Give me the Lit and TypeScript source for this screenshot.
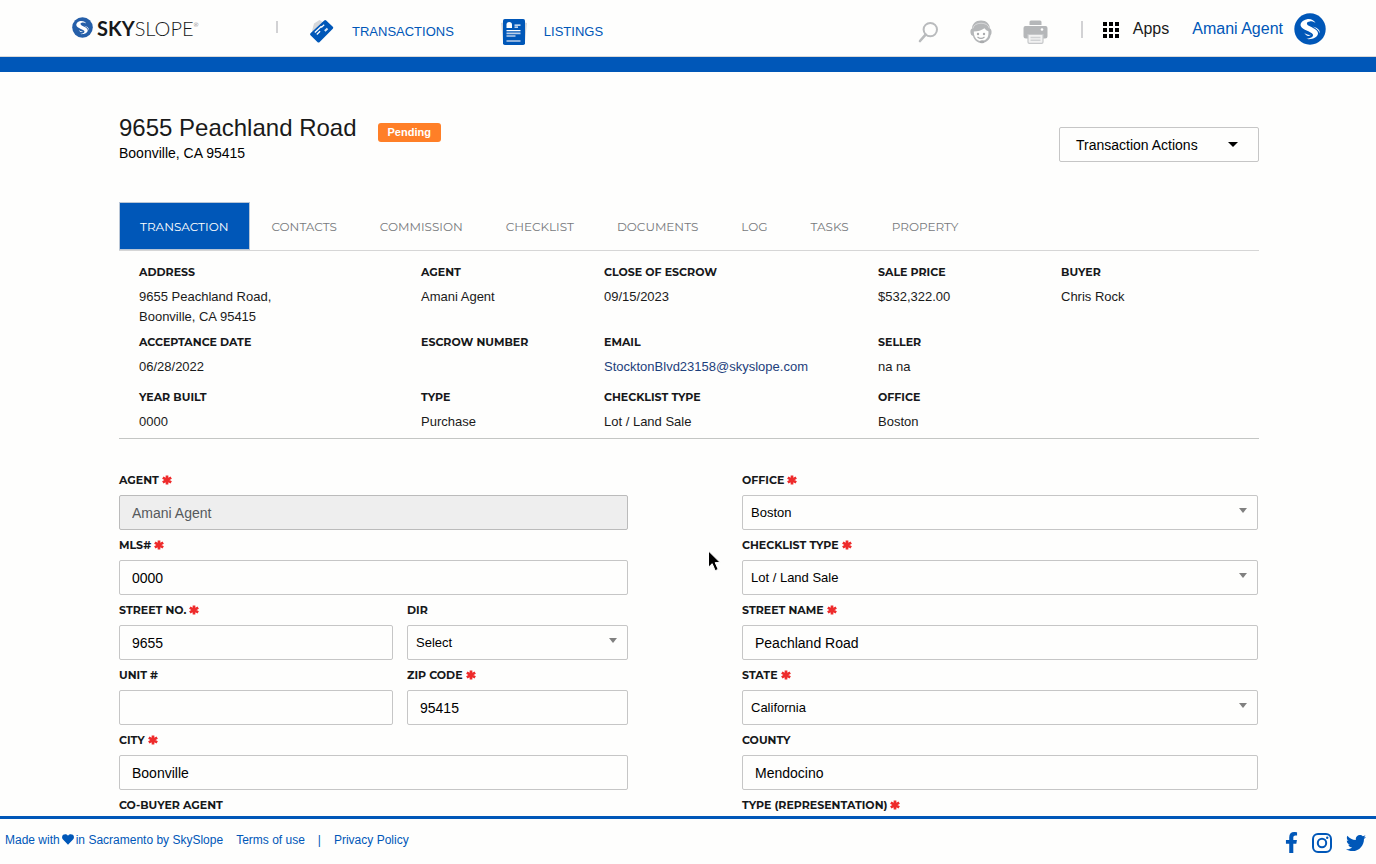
import { LitElement, html, css, svg, nothing } from "lit";
import { customElement } from "lit/decorators.js";
import { classMap } from "lit/directives/class-map.js";

interface SummaryItem {
  label: string;
  lines: string[];
  email?: boolean;
}

interface Field {
  id: string;
  label: string;
  value: string;
  required?: boolean;
  kind?: "text" | "select";
  disabled?: boolean;
}

const TABS = ["Transaction", "Contacts", "Commission", "Checklist", "Documents", "Log", "Tasks", "Property"];

const SUMMARY: (SummaryItem | null)[] = [
  { label: "Address", lines: ["9655 Peachland Road,", "Boonville, CA 95415"] },
  { label: "Agent", lines: ["Amani Agent"] },
  { label: "Close of Escrow", lines: ["09/15/2023"] },
  { label: "Sale Price", lines: ["$532,322.00"] },
  { label: "Buyer", lines: ["Chris Rock"] },
  { label: "Acceptance Date", lines: ["06/28/2022"] },
  { label: "Escrow Number", lines: [] },
  { label: "Email", lines: ["StocktonBlvd23158@skyslope.com"], email: true },
  { label: "Seller", lines: ["na na"] },
  null,
  { label: "Year Built", lines: ["0000"] },
  { label: "Type", lines: ["Purchase"] },
  { label: "Checklist Type", lines: ["Lot / Land Sale"] },
  { label: "Office", lines: ["Boston"] },
  null,
];

const LEFT: Field[][] = [
  [{ id: "agent", label: "Agent", value: "Amani Agent", required: true, disabled: true }],
  [{ id: "mls", label: "MLS#", value: "0000", required: true }],
  [
    { id: "street-no", label: "Street No.", value: "9655", required: true },
    { id: "dir", label: "Dir", value: "Select", kind: "select" },
  ],
  [
    { id: "unit", label: "Unit #", value: "" },
    { id: "zip", label: "Zip Code", value: "95415", required: true },
  ],
  [{ id: "city", label: "City", value: "Boonville", required: true }],
  [{ id: "co-buyer", label: "Co-Buyer Agent", value: "" }],
];

const RIGHT: Field[][] = [
  [{ id: "office", label: "Office", value: "Boston", required: true, kind: "select" }],
  [{ id: "checklist", label: "Checklist Type", value: "Lot / Land Sale", required: true, kind: "select" }],
  [{ id: "street-name", label: "Street Name", value: "Peachland Road", required: true }],
  [{ id: "state", label: "State", value: "California", required: true, kind: "select" }],
  [{ id: "county", label: "County", value: "Mendocino" }],
  [{ id: "type", label: "Type (Representation)", value: "", required: true, kind: "select" }],
];

const swirl = svg`
  <path fill="#fff" d="M21.500 10C20.500 7.500 17 5.600 13 6.200C8 7.200 5.600 10.600 7 13.600C8.800 17 16.400 18.400 18.600 21C20 23.200 18 25 12.400 26C18.600 26.800 23.600 24.400 24 20.600C24.300 16.600 18.600 15 14.800 12.800C12 11 12.400 8.800 15.800 8.400C18 8.200 20 8.800 21.500 10Z"/>
  <path fill="#fff" d="M18.600 13.400C22.600 14.400 26.400 16.400 25.600 20.400C25.200 17.400 22.200 15.400 18.600 13.400ZM10.400 19.800C12 21.600 14.600 22.200 17 21.800C15 24 11.400 22.800 10.400 19.800Z"/>`;

@customElement("app-root")
export class AppRoot extends LitElement {
  static styles = css`
    :host {
      --blue: #0057b8;
      --page: #fefefd;
      --line: #c6c6c6;
      display: flex;
      flex-direction: column;
      height: 100vh;
      background: var(--page);
      color: #1a1a1a;
      font-family: "Helvetica Neue", "Liberation Sans", Arial, sans-serif;
      font-size: 13px;
      line-height: 20px;
    }
    *, *::before, *::after { box-sizing: border-box; }
    svg { display: block; flex: none; }
    a { color: var(--blue); text-decoration: none; }
    button {
      padding: 0;
      border: 0;
      background: none;
      font: inherit;
      color: inherit;
      cursor: pointer;
    }

    .top {
      display: flex;
      align-items: center;
      height: 72px;
      padding: 0 50px 0 72px;
      border-bottom: 15px solid var(--blue);
      box-shadow: inset 0 -1px #d9d9d9;
      flex: none;
    }
    .brand {
      display: flex;
      align-items: center;
      gap: 4px;
      width: 204px;
      padding-bottom: 2px;
      color: #16181a;
      font: 300 20px/24px Lato, sans-serif;
    }
    .brand b { font-weight: 700; }
    .brand sup { font-size: 6px; line-height: 6px; vertical-align: 9px; }
    .rule { width: 2px; height: 12px; margin-bottom: 4px; background: #d2d2d4; }
    .rule.tall { height: 17px; margin: 2px 20px 0 33px; }
    .nav { display: flex; align-items: center; gap: 47px; margin-left: 31px; padding-top: 6px; }
    .nav a { display: flex; align-items: center; gap: 17px; }
    .tools { display: flex; align-items: center; margin-left: auto; }
    .quick { display: flex; align-items: center; gap: 31px; padding-top: 6px; }
    .apps {
      display: flex;
      align-items: center;
      gap: 14px;
      margin-right: 23px;
      font-size: 16px;
    }
    .apps svg { margin-top: 3px; }
    .user { display: flex; align-items: center; gap: 11px; font-size: 16px; }

    .scroll { flex: 1; min-height: 0; overflow: auto; padding: 0 117px 0 119px; scrollbar-width: none; }
    .title {
      display: flex;
      justify-content: space-between;
      align-items: flex-start;
      padding-top: 42px;
      height: 130px;
    }
    .heading { display: flex; align-items: center; gap: 21px; }
    h1 { margin: 0; font-size: 24px; line-height: 28px; font-weight: 400; }
    .city { margin: 0; font-size: 14px; line-height: 22px; color: #000; }
    .badge {
      margin-top: 8px;
      padding: 0 10px;
      border-radius: 3px;
      background: #ff7f27;
      color: #fff;
      font-size: 11px;
      line-height: 19px;
      font-weight: 700;
    }
    .actions {
      display: flex;
      align-items: center;
      justify-content: space-between;
      width: 200px;
      height: 35px;
      margin-top: 13px;
      padding: 0 20px 0 16px;
      border: 1px solid var(--line);
      border-radius: 2px;
      font-size: 14px;
      color: #000;
    }

    .tabs { display: flex; border-bottom: 1px solid #d6d6d6; }
    .tab {
      height: 48px;
      padding: 0 22px 0 21px;
      color: #77797c;
      font: 400 12px/50px Montserrat, Inter, sans-serif;
      text-transform: uppercase;
    }
    .tab.active { background: var(--blue); color: #fff; box-shadow: inset 0 0 0 1px #b9c6d6; }

    .summary {
      display: grid;
      grid-template-columns: 282fr 183fr 274fr 183fr 198fr;
      grid-auto-rows: minmax(52px, auto);
      row-gap: 3px;
      margin: 0;
      padding: 9px 0 1px 20px;
      border-bottom: 1px solid #c4c6c4;
    }
    .summary dt, .label {
      font: 700 11px/24px Montserrat, Inter, sans-serif;
      color: #16181a;
      text-transform: uppercase;
    }
    .summary dt { margin-bottom: 3px; }
    .summary dd { margin: 0; }
    .summary a { color: #1d3f7c; }

    .form {
      display: grid;
      grid-template-columns: 509fr 516fr;
      column-gap: 114px;
      padding: 26px 1px 40px 0;
    }
    .row { display: grid; grid-template-columns: 1fr; }
    .row.two { grid-template-columns: 274fr 221fr; column-gap: 14px; }
    .label { display: flex; align-items: center; gap: 3px; line-height: 30px; }
    .box { position: relative; }
    .control {
      display: block;
      width: 100%;
      height: 35px;
      padding: 0 12px;
      border: 1px solid var(--line);
      border-radius: 2px;
      background: var(--page);
      color: #000;
      font: 14px/20px "Helvetica Neue", "Liberation Sans", Arial, sans-serif;
      outline: 0;
      appearance: none;
    }
    .control:disabled { background: #eeeeee; border-color: #bbb; color: #55595c; opacity: 1; }
    select.control { padding: 0 8px; font-size: 13px; }
    .arrow { position: absolute; right: 11px; top: 13px; pointer-events: none; }

    .bottom {
      display: flex;
      align-items: center;
      justify-content: space-between;
      height: 48px;
      padding: 0 10px 4px 5px;
      border-top: 3px solid var(--blue);
      color: var(--blue);
      font-size: 12px;
      flex: none;
    }
    .legal, .made, .social { display: flex; align-items: center; }
    .made { gap: 2px; }
    .legal { gap: 13px; }
    .social { gap: 14px; padding-top: 6px; }
    .pointer { position: fixed; left: 707px; top: 550px; pointer-events: none; }
  `;

  private renderField(f: Field) {
    return html`<div>
      <label class="label" for=${f.id}>
        <span>${f.label}</span>
        ${f.required
          ? html`<svg width="10" height="10" viewBox="0 0 10 10" aria-hidden="true">
              <path stroke="#ee2b2b" stroke-width="2.700" d="M5 .5v9M.8 2.600l8.400 4.800M9.200 2.600L.8 7.400" />
            </svg>`
          : nothing}
      </label>
      ${f.kind === "select"
        ? html`<div class="box">
            <select class="control" id=${f.id}><option>${f.value}</option></select>
            <svg class="arrow" width="8" height="5" viewBox="0 0 8 5" aria-hidden="true"><path fill="#808080" d="M0 0h8L4 5z" /></svg>
          </div>`
        : html`<input class="control" id=${f.id} type="text" .value=${f.value} ?disabled=${!!f.disabled} />`}
    </div>`;
  }

  private renderColumn(rows: Field[][]) {
    return html`<div>
      ${rows.map((r) => html`<div class=${classMap({ row: true, two: r.length === 2 })}>${r.map((f) => this.renderField(f))}</div>`)}
    </div>`;
  }

  render() {
    return html`
      <header class="top">
        <a class="brand" href="#" aria-label="SkySlope">
          <svg width="21" height="21" viewBox="0 0 32 32"><circle cx="16" cy="16" r="15.700" fill="#255fa9" />${swirl}</svg>
          <span><b>SKY</b>SLOPE<sup>®</sup></span>
        </a>
        <span class="rule"></span>
        <nav class="nav">
          <a href="#">
            <svg width="26" height="25" viewBox="0 0 26 25">
              <path fill="#d5d7da" d="M5 4.500L10.500 1L20 7L8 18L3 12z" />
              <path fill="#0057b8" d="M15.200 1.400q1-.9 2 0l6.600 6.300q1 1 0 2L10.700 22.900q-1.200 1-2.300 0L1.500 16.200q-1-1 0-2z" />
              <path stroke="#fff" stroke-width="1.300" d="M5.800 13.500l6.700-6.200M7.800 15.500l3.300-3.200M12.200 8.400l3-2.600" />
              <path stroke="#dbe6f4" stroke-width="2" d="M15.800 12l2.700-2.500" />
            </svg>
            TRANSACTIONS
          </a>
          <a href="#">
            <svg width="26" height="28" viewBox="1 0 26 28">
              <path fill="#d5d7da" d="M1 5l4-1v19l-2 .5zM27 5l-4-1v19l2 .5z" />
              <rect x="3" y="1" width="22" height="26" rx="1.800" fill="#0057b8" />
              <path fill="#fff" d="M6.500 10V6.500Q6.500 4 9.200 4T12 6.500V10z" />
              <path stroke="#fff" stroke-width="1.300" d="M14.500 7.200h6M14.500 9.200h3.500M6.500 12.600h14" />
              <path stroke="#bcd0e9" stroke-width="1.700" d="M6.500 15.300h14M6.500 18h9M6.500 23h14" />
            </svg>
            LISTINGS
          </a>
        </nav>
        <div class="tools">
          <div class="quick">
            <button aria-label="Search">
              <svg width="21" height="22" viewBox="0 0 21 22" fill="none" stroke="#b9bbbd">
                <circle cx="12.300" cy="8.600" r="6.700" stroke-width="2" />
                <path stroke-width="2.600" stroke-linecap="round" d="M7.600 13.600L2 20" />
              </svg>
            </button>
            <button aria-label="Support">
              <svg width="22" height="24" viewBox="0 0 22 24">
                <path fill="#b5b7b9" d="M11 .5C5.500.5 2.200 4 2 8.500C.4 9 .3 11 .5 13Q.7 15.500 3 16C4 20 7.500 23 11.500 23C15 22.900 20 20.500 20.500 15.500C22 14 22 9.500 20 8.500C19.600 4 16.500.5 11 .5z" />
                <path fill="#fefefd" d="M3.800 11.500C7 11.600 12 10.200 14.500 8.200Q16 10.500 18.400 11.200C18.800 16 17.500 18.500 14.500 20.300Q11.500 21.800 8.500 20.500C5 18.700 3.700 15.500 3.800 11.500z" />
                <path fill="none" stroke="#dfe0e1" stroke-width=".8" d="M2.800 8.500C4 1.500 18 1.500 19.300 8.300" />
                <circle cx="8" cy="14" r="1.200" fill="#a9abad" /><circle cx="14" cy="14" r="1.200" fill="#a9abad" />
                <path fill="none" stroke="#a9abad" stroke-width="1.100" d="M7.500 17Q11 19.800 14.500 17" />
                <ellipse cx="12" cy="21.800" rx="2.500" ry="1.500" fill="#a9abad" />
              </svg>
            </button>
            <button aria-label="Print">
              <svg width="25" height="24" viewBox="0 0 25 24">
                <path fill="#b5b7b9" d="M6.500 5V2Q6.500.5 8 .5h9q1.500 0 1.500 1.500V5zM2.500 6h20Q24.500 6 24.500 8v8q0 2.500-2.500 2.500H3Q.5 18.500.5 16V8q0-2 2-2z" />
                <circle cx="19" cy="9.500" r="1.300" fill="#fff" />
                <path fill="#f2f2f2" stroke="#c6c8ca" stroke-width="1.200" d="M5 14.500h15V22q0 1.300-1.300 1.300H6.300Q5 23.300 5 22z" />
                <path stroke="#d0d2d4" stroke-width="1.500" d="M7.500 17.500h10M7.500 20.200h10" />
              </svg>
            </button>
          </div>
          <span class="rule tall"></span>
          <button class="apps">
            <svg width="16" height="16" viewBox="0 0 16 16" aria-hidden="true">
              <path d="M0 0h4v4H0zM6 0h4v4H6zM12 0h4v4h-4zM0 6h4v4H0zM6 6h4v4H6zM12 6h4v4h-4zM0 12h4v4H0zM6 12h4v4H6zM12 12h4v4h-4z" />
            </svg>
            Apps
          </button>
          <a class="user" href="#">
            Amani Agent
            <svg width="32" height="32" viewBox="0 0 32 32"><circle cx="16" cy="16" r="15.700" fill="#0057b8" />${swirl}</svg>
          </a>
        </div>
      </header>

      <main class="scroll">
        <div class="title">
          <div>
            <div class="heading">
              <h1>9655 Peachland Road</h1>
              <span class="badge">Pending</span>
            </div>
            <p class="city">Boonville, CA 95415</p>
          </div>
          <button class="actions">
            Transaction Actions
            <svg width="10" height="5" viewBox="0 0 10 5" aria-hidden="true"><path d="M0 0h10L5 5z" /></svg>
          </button>
        </div>

        <nav class="tabs">
          ${TABS.map((t, i) => html`<a href="#" class=${classMap({ tab: true, active: i === 0 })}>${t}</a>`)}
        </nav>

        <dl class="summary">
          ${SUMMARY.map((s) =>
            s
              ? html`<div>
                  <dt>${s.label}</dt>
                  ${s.lines.map((l) => html`<dd>${s.email ? html`<a href="mailto:${l}">${l}</a>` : l}</dd>`)}
                </div>`
              : html`<div></div>`
          )}
        </dl>

        <form class="form">${this.renderColumn(LEFT)} ${this.renderColumn(RIGHT)}</form>
      </main>

      <footer class="bottom">
        <div class="legal">
          <span class="made">
            Made with
            <svg width="12" height="11" viewBox="0 0 12 11" aria-hidden="true">
              <path fill="#0057b8" d="M6 10.700L1 5.600C-.4 4-.2 1.800 1.200.8C2.700-.2 4.700 0 6 1.700C7.300 0 9.300-.2 10.800.8C12.200 1.800 12.400 4 11 5.600z" />
            </svg>
            in Sacramento by SkySlope
          </span>
          <a href="#">Terms of use</a>
          <span>|</span>
          <a href="#">Privacy Policy</a>
        </div>
        <div class="social">
          <a href="#" aria-label="Facebook">
            <svg width="13" height="21" viewBox="0 0 320 512"><path fill="#0057b8" d="M279.140 288l14.220-92.660h-88.910v-60.130c0-25.350 12.420-50.060 52.240-50.060h40.420V6.260S260.430 0 225.360 0c-73.220 0-121.080 44.380-121.080 124.720v70.620H22.890V288h81.390v224h100.170V288z" /></svg>
          </a>
          <a href="#" aria-label="Instagram">
            <svg width="20" height="20" viewBox="0 0 20 20" fill="none" stroke="#0057b8" stroke-width="2">
              <rect x="1" y="1" width="18" height="18" rx="5" /><circle cx="10" cy="10" r="4.200" />
              <circle cx="15.200" cy="4.800" r="1.200" fill="#0057b8" stroke="none" />
            </svg>
          </a>
          <a href="#" aria-label="Twitter">
            <svg width="20" height="20" viewBox="0 0 512 512"><path fill="#0057b8" d="M459.370 151.716c.325 4.548.325 9.097.325 13.645 0 138.720-105.583 298.558-298.558 298.558-59.452 0-114.680-17.219-161.137-47.106 8.447.974 16.568 1.299 25.340 1.299 49.055 0 94.213-16.568 130.274-44.832-46.132-.975-84.792-31.188-98.112-72.772 6.498.974 12.995 1.624 19.818 1.624 9.421 0 18.843-1.300 27.614-3.573-48.081-9.747-84.143-51.980-84.143-102.985v-1.299c13.969 7.797 30.214 12.670 47.431 13.319-28.264-18.843-46.781-51.005-46.781-87.391 0-19.492 5.197-37.360 14.294-52.954 51.655 63.675 129.300 105.258 216.365 109.807-1.624-7.797-2.599-15.918-2.599-24.040 0-57.828 46.782-104.934 104.934-104.934 30.213 0 57.502 12.670 76.670 33.137 23.715-4.548 46.456-13.320 66.599-25.340-7.798 24.366-24.366 44.833-46.132 57.827 21.117-2.273 41.584-8.122 60.426-16.243-14.292 20.791-32.161 39.308-52.628 54.253z" /></svg>
          </a>
        </div>
      </footer>

      <svg class="pointer" width="14" height="22" viewBox="0 0 14 22" aria-hidden="true">
        <path fill="#000" stroke="#fff" stroke-width="1" d="M1.500 1v16.200l3.700-3.500 3 7 3-1.300-3-6.800h5z" />
      </svg>
    `;
  }
}
